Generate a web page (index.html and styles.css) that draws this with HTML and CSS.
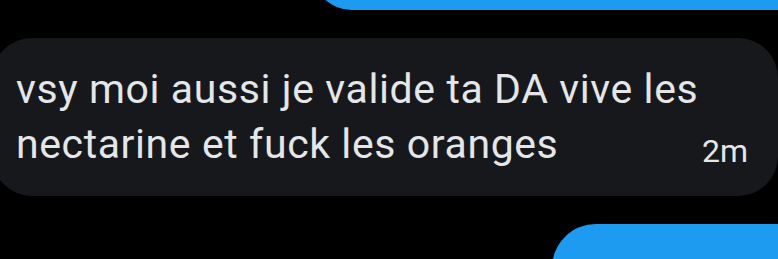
FILE: index.html
```html
<!DOCTYPE html>
<html lang="fr">
<head>
    <meta charset="UTF-8">
    <meta name="viewport" content="width=device-width, initial-scale=1.0">
    <title>Messages</title>
    <link rel="stylesheet" href="styles.css">
</head>
<body>
    <div class="conversation">
        <div class="bulle bulle-envoyee bulle-haut"></div>

        <div class="bulle bulle-recue">
            <p class="message-texte">vsy moi aussi je valide ta DA vive les nectarine et fuck les oranges</p>
            <span class="message-heure">2m</span>
        </div>

        <div class="bulle bulle-envoyee bulle-bas"></div>
    </div>
</body>
</html>
```

FILE: styles.css
```css
/* Fil de messages, thème sombre */
body {
    background-color: #000000;
    color: #e4e6e7;
    font-family: 'Roboto', 'Liberation Sans', sans-serif;
    margin: 0;
}

.conversation {
    display: flex;
    flex-direction: column;
    height: 259px;
    overflow: hidden; /* les bulles bleues sont coupées par le cadre */
}

.bulle {
    flex-shrink: 0;
}

/* Bulles bleues (messages envoyés), à droite */
.bulle-envoyee {
    background-color: #1d9bf0;
    align-self: flex-end;
}

.bulle-haut {
    width: 466px;
    height: 60px;
    margin-top: -50px; /* seule la fin de la bulle est visible */
    border-radius: 0 0 0 40px;
}

.bulle-bas {
    width: 226px;
    height: 80px;
    margin-top: 28px;
    border-radius: 44px 0 0 0;
}

/* Bulle grise (message reçu) */
.bulle-recue {
    background-color: #16181c;
    margin-top: 28px;
    margin-left: -8px;
    padding: 24px 30px 24px 24px;
    border-radius: 40px;
    display: flex;
    align-items: flex-end;
}

.message-texte {
    flex: 1;
    margin: 0;
    font-size: 41px;
    line-height: 55px;
    letter-spacing: 0.6px;
}

.message-heure {
    font-size: 32px;
    line-height: 32px;
    margin-bottom: 5px;
}
```
